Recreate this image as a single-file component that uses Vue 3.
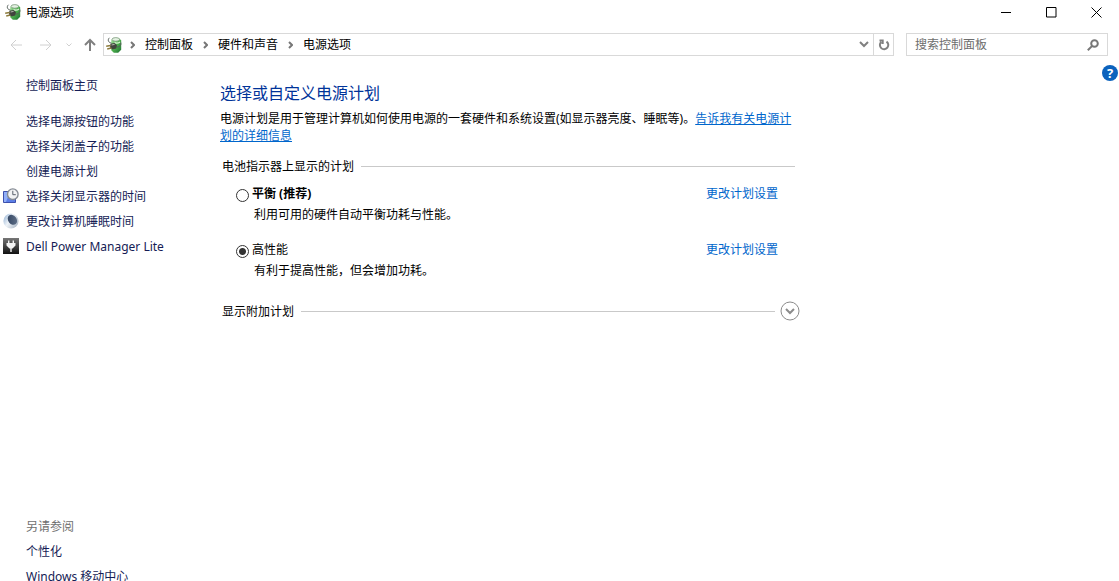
<script setup>
import { ref } from 'vue'

const plan = ref('high')
const query = ref('')
const crumbs = ['控制面板', '硬件和声音', '电源选项']
const tasks = [
  { text: '选择电源按钮的功能' },
  { text: '选择关闭盖子的功能' },
  { text: '创建电源计划' },
  { text: '选择关闭显示器的时间', icon: 'display' },
  { text: '更改计算机睡眠时间', icon: 'moon' },
  { text: 'Dell Power Manager Lite', icon: 'dell' },
]
const plans = [
  { id: 'balanced', name: '平衡 (推荐)', bold: true, desc: '利用可用的硬件自动平衡功耗与性能。' },
  { id: 'high', name: '高性能', bold: false, desc: '有利于提高性能，但会增加功耗。' },
]
</script>

<template>
  <div class="window">
    <svg class="defs" width="0" height="0" aria-hidden="true">
      <defs>
        <linearGradient id="batt" x1="0" x2="1" y1="0" y2="1">
          <stop offset="0" stop-color="#b4e6ac" />
          <stop offset="0.5" stop-color="#4fb04e" />
          <stop offset="1" stop-color="#1c7030" />
        </linearGradient>
        <symbol id="power" viewBox="0 0 16 16">
          <path d="M5.200 3 8 .9h4.600l2.600 2.300v9.600l-3 2.900H7.800l-2.600-2.400z" fill="url(#batt)" />
          <ellipse cx="9.800" cy="2.400" rx="3.800" ry="1.800" fill="#e4f2e2" stroke="#6b8d6c" stroke-width=".7" />
          <path d="M8.500 5.600c2 .9 4 .6 5.600-.6" fill="none" stroke="#d3f4ce" stroke-width="1.200" />
          <path d="M3.400.8C1.400 2.800 2.200 5.600 5.400 6M14.800 5.500c.6 2.600-.8 4.600-4.200 4.600" fill="none" stroke="#56605a" stroke-width="1" />
          <path d="M4.400 6.800 8.600 6l2.400 2.200-.8 3.200-3.800 1.200-2.400-2z" fill="#41443e" />
          <path d="M5.600 8 8.600 7.400" stroke="#b5b9b0" stroke-width="1" />
          <path d="M.2 9.200 4.600 8.400M1.200 12l4.200-.9" stroke="#8d7b3c" stroke-width="1.500" />
        </symbol>
      </defs>
    </svg>

    <header class="titlebar">
      <svg class="app-icon" width="16" height="16"><use href="#power" /></svg>
      <h1>电源选项</h1>
      <div class="captions">
        <button type="button" aria-label="最小化">
          <svg width="11" height="11"><path d="M0 5.500h10" /></svg>
        </button>
        <button type="button" aria-label="最大化">
          <svg width="11" height="11"><path d="M.5.5h9.500v9.500H.5z" /></svg>
        </button>
        <button type="button" aria-label="关闭">
          <svg width="11" height="11"><path d="m.5.5 10 10m0-10-10 10" /></svg>
        </button>
      </div>
    </header>

    <nav class="toolbar">
      <div class="history">
        <button type="button" class="off" aria-label="后退">
          <svg width="12" height="12"><path d="M12 6H1m5-5L1 6l5 5" /></svg>
        </button>
        <button type="button" class="off" aria-label="前进">
          <svg width="12" height="12"><path d="M0 6h11M6 1l5 5-5 5" /></svg>
        </button>
        <button type="button" class="recent off" aria-label="最近位置">
          <svg width="6" height="6"><path d="m.5 1.500 2.500 2.500 2.500-2.500" /></svg>
        </button>
        <button type="button" class="up" aria-label="上移">
          <svg width="12" height="13"><path d="M6 13V2M1 7l5-5 5 5" /></svg>
        </button>
      </div>
      <div class="address">
        <svg class="addr-icon" width="16" height="16"><use href="#power" /></svg>
        <template v-for="c in crumbs" :key="c">
          <svg class="sep" width="5" height="8"><path d="m1 1 3 3-3 3" /></svg>
          <a href="#">{{ c }}</a>
        </template>
        <button type="button" class="drop" aria-label="历史记录">
          <svg width="10" height="7"><path d="m1 1 4 4 4-4" /></svg>
        </button>
        <button type="button" class="refresh" aria-label="刷新">
          <svg width="12" height="12"><path d="M8.500 2.600A4.200 4.200 0 1 1 3.200 3M1.500 1.600h3.200v3.400" /></svg>
        </button>
      </div>
      <label class="search">
        <input v-model="query" type="text" placeholder="搜索控制面板" aria-label="搜索控制面板" />
        <svg width="12" height="12"><circle cx="7.500" cy="4.500" r="3.300" /><path d="M5.200 6.900.8 11.300" /></svg>
      </label>
    </nav>

    <div class="body">
      <aside class="side">
        <a href="#" class="row home">控制面板主页</a>
        <a v-for="t in tasks" :key="t.text" href="#" class="row">
          <svg v-if="t.icon === 'display'" class="task-icon" width="16" height="16">
            <path d="M.5 3.500h12v11H.5z" fill="#5b7ee8" stroke="#3d50ac" />
            <path d="M1 4h6l-4 10H1z" fill="#91aff8" />
            <circle cx="9.800" cy="6.200" r="5.300" fill="#f1f2f4" stroke="#858b94" stroke-width="1.400" />
            <path d="M9.800 2.800v3.900h3" fill="none" stroke="#59616d" />
          </svg>
          <svg v-else-if="t.icon === 'moon'" class="task-icon" width="16" height="16">
            <defs>
              <linearGradient id="moon" x2="1" y2=".6"><stop offset="0" stop-color="#8cacd0" /><stop offset=".5" stop-color="#eef3f8" /><stop offset="1" stop-color="#b4bfcc" /></linearGradient>
              <linearGradient id="shade" x2="1" y2="1"><stop offset="0" stop-color="#2f415e" /><stop offset="1" stop-color="#64748c" /></linearGradient>
            </defs>
            <circle cx="8" cy="8" r="7.600" fill="url(#moon)" />
            <ellipse cx="9.400" cy="6.800" rx="4.200" ry="5.400" transform="rotate(-38 9.400 6.800)" fill="url(#shade)" />
          </svg>
          <svg v-else-if="t.icon === 'dell'" class="task-icon" width="16" height="16">
            <defs>
              <linearGradient id="dell" x2="0" y2="1"><stop offset="0" stop-color="#777" /><stop offset="1" stop-color="#111" /></linearGradient>
            </defs>
            <path d="M0 0h16v16H0z" fill="url(#dell)" />
            <path d="M3.500 5H5V2.500h1.400V5h3.200V2.500H11V5h1.500v2.500l-3 3h-.8V14H7.300v-3.500h-.8l-3-3z" fill="#f4f4f4" />
          </svg>
          {{ t.text }}
        </a>
        <div class="also">
          <h2 class="row">另请参阅</h2>
          <a href="#" class="row">个性化</a>
          <a href="#" class="row">Windows 移动中心</a>
        </div>
      </aside>

      <main class="main">
        <h2 class="heading">选择或自定义电源计划</h2>
        <p class="intro">电源计划是用于管理计算机如何使用电源的一套硬件和系统设置(如显示器亮度、睡眠等)。<a href="#">告诉我有关电源计划的详细信息</a></p>
        <section>
          <h3 class="group">电池指示器上显示的计划</h3>
          <div v-for="p in plans" :key="p.id" class="plan">
            <input :id="p.id" v-model="plan" type="radio" name="plan" :value="p.id" />
            <label :for="p.id" :class="{ bold: p.bold }">{{ p.name }}</label>
            <a href="#">更改计划设置</a>
            <p>{{ p.desc }}</p>
          </div>
        </section>
        <div class="more">
          <h3 class="group">显示附加计划</h3>
          <button type="button" aria-label="显示附加计划">
            <svg width="20" height="20"><circle cx="10" cy="10" r="9" /><path d="m6 8 4 4 4-4" /></svg>
          </button>
        </div>
      </main>

      <button type="button" class="help" aria-label="帮助">?</button>
    </div>
  </div>
</template>

<style>
html,
body {
  margin: 0;
  background: #fff;
}
</style>

<style scoped>
.window {
  height: 100vh;
  overflow: hidden;
  background: #fff;
  color: #000;
  font: 12px/17px "Noto Sans", "Noto Sans CJK SC", sans-serif;
}
.defs {
  position: absolute;
}
h1,
h2,
h3,
p {
  margin: 0;
  font-size: 12px;
  font-weight: 400;
}
a {
  color: #0066cc;
  text-decoration: none;
}
button {
  display: flex;
  align-items: center;
  justify-content: center;
  padding: 0;
  border: 0;
  background: none;
  font: inherit;
}
svg {
  flex: none;
}
button svg,
.sep,
.search svg {
  fill: none;
  stroke: #000;
}

.titlebar {
  display: flex;
  align-items: center;
  height: 24px;
  padding-left: 5px;
}
.titlebar h1 {
  margin-left: 5px;
}
.captions {
  display: flex;
  margin-left: auto;
}
.captions button {
  width: 45px;
  height: 24px;
}

.toolbar {
  display: flex;
  align-items: center;
  height: 23px;
  padding: 9px 11px 0 10px;
}
.history {
  display: flex;
  align-items: center;
  width: 93px;
}
.history button {
  margin-right: 18px;
}
.history button + button {
  margin-right: 14px;
}
.history button.recent {
  margin-right: 12px;
}
.history button.up {
  margin-right: 0;
}
.history svg {
  stroke: #808080;
  stroke-width: 2;
}
.history .off svg {
  stroke: #d0d0d0;
  stroke-width: 1;
}
.address {
  display: flex;
  flex: 1;
  align-items: center;
  box-sizing: border-box;
  height: 23px;
  border: 1px solid #d9d9d9;
}
.addr-icon {
  margin: 0 8px 0 2px;
}
.address a {
  margin: 0 10px;
  color: #000;
}
.sep {
  stroke: #777;
  stroke-width: 2;
}
.drop {
  width: 18px;
  height: 21px;
  margin-left: auto;
}
.refresh {
  width: 20px;
  height: 21px;
  border-left: 1px solid #d9d9d9;
}
.drop svg,
.refresh svg {
  stroke: #808080;
  stroke-width: 2;
}
.search {
  display: flex;
  align-items: center;
  box-sizing: border-box;
  width: 202px;
  height: 23px;
  margin-left: 12px;
  padding: 0 8px;
  border: 1px solid #d9d9d9;
}
.search input {
  flex: 1;
  min-width: 0;
  padding: 0;
  border: 0;
  outline: 0;
  background: none;
  color: #000;
  font: inherit;
}
.search input::placeholder {
  color: #6d6d6d;
  opacity: 1;
}
.search svg {
  stroke: #777;
  stroke-width: 2;
}

.body {
  display: flex;
  align-items: flex-start;
}
.side {
  flex: none;
  box-sizing: border-box;
  width: 220px;
  padding-top: 17px;
}
.row {
  position: relative;
  display: block;
  padding-left: 26px;
  color: #151c55;
  line-height: 25px;
}
.home {
  margin-bottom: 11px;
}
.task-icon {
  position: absolute;
  top: 4px;
  left: 3px;
}
.also {
  margin-top: 255px;
}
h2.row {
  color: #707070;
}

.main {
  flex: 0 1 580px;
  padding-top: 27px;
}
.heading {
  color: #003399;
  font-size: 16px;
  line-height: 21px;
}
.intro {
  margin: 6px 4px 14px 0;
}
.intro a {
  text-decoration: underline;
}
.group {
  display: flex;
  flex: 1;
  align-items: center;
  gap: 7px;
  padding: 0 5px 0 2px;
}
.group::after {
  flex: 1;
  height: 1px;
  background: #c9c9c9;
  content: "";
}
.plan {
  display: grid;
  grid-template-columns: 16px 1fr auto;
  row-gap: 4px;
  margin: 10px 22px 18px 16px;
}
.plan input {
  appearance: none;
  box-sizing: border-box;
  width: 13px;
  height: 13px;
  margin: 4px 0 0;
  border: 1px solid #333;
  border-radius: 50%;
  background: #fff;
}
.plan input:checked {
  background: radial-gradient(circle, #333 3px, #fff 4px);
}
.plan label.bold {
  font-weight: 700;
}
.plan p {
  grid-column: 2 / 4;
  padding-left: 2px;
}
.more {
  display: flex;
  align-items: center;
  margin-top: 22px;
}
.more svg {
  stroke: #8b8b8b;
}
.more path {
  stroke-width: 2;
}
.help {
  width: 16px;
  height: 16px;
  margin: 9px 1px 0 auto;
  border-radius: 50%;
  background: #0b62bd;
  color: #fff;
  font-size: 13px;
  font-weight: 700;
}
</style>
